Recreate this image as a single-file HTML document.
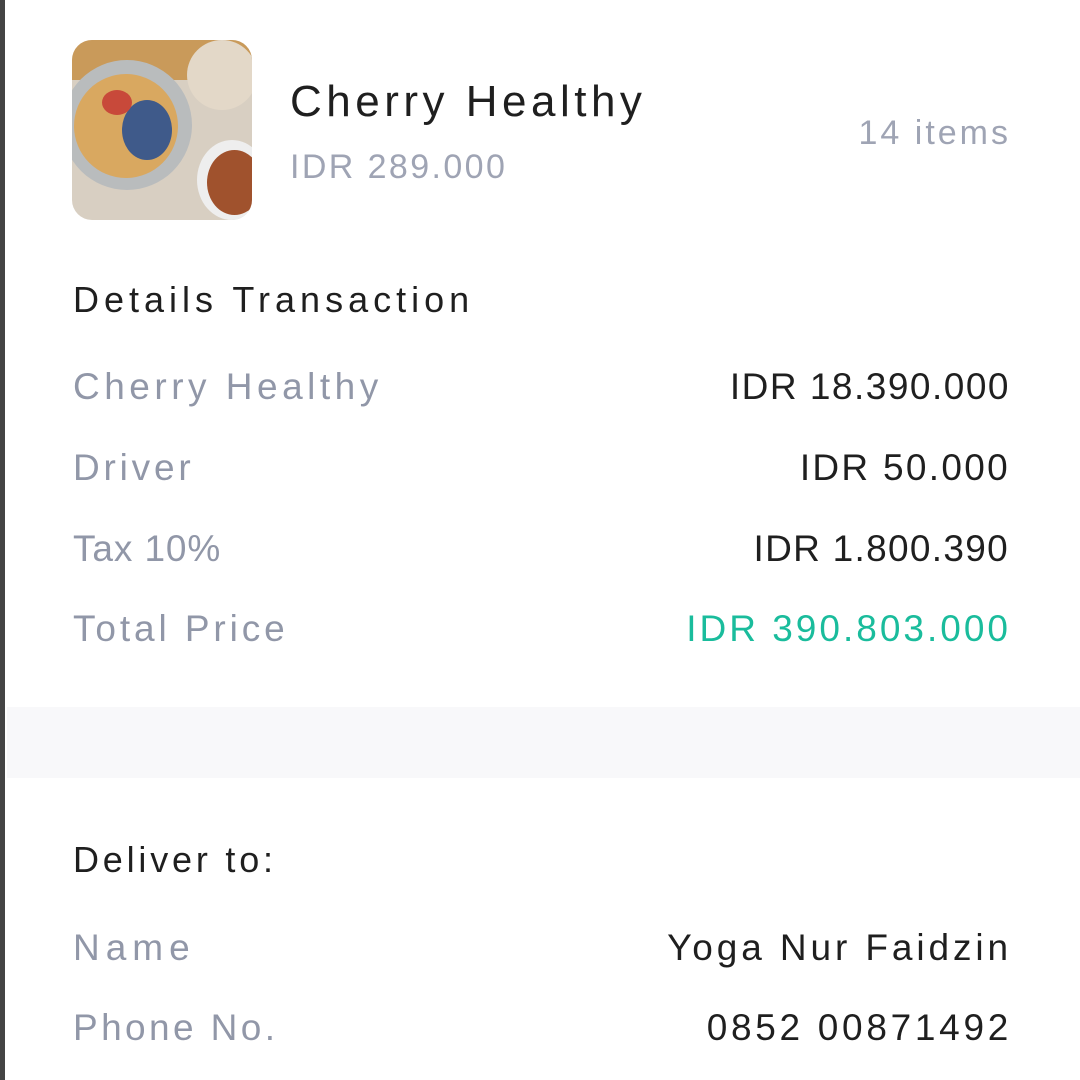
<!DOCTYPE html>
<html><head><meta charset="utf-8"><style>
html,body{margin:0;padding:0;width:1080px;height:1080px;background:#fff;overflow:hidden;font-family:"Liberation Sans",sans-serif}
.a{position:absolute;white-space:nowrap;line-height:1}
.l{left:73px;color:#9197a8;font-size:37px}
.r{color:#1f1f1f;font-size:37px;text-align:right}
</style></head><body>
<div style="position:absolute;left:0;top:0;width:5px;height:1080px;background:#444"></div>
<div style="position:absolute;left:72px;top:40px;width:180px;height:180px;border-radius:20px;overflow:hidden;background:#d8cfc2">
<div style="position:absolute;left:0;top:0;width:180px;height:40px;background:#c99a5a"></div>
<div style="position:absolute;left:-10px;top:20px;width:130px;height:130px;border-radius:50%;background:#b9bcbd"></div>
<div style="position:absolute;left:2px;top:34px;width:104px;height:104px;border-radius:50%;background:#d9a860"></div>
<div style="position:absolute;left:50px;top:60px;width:50px;height:60px;border-radius:50%;background:#3f5a8a"></div>
<div style="position:absolute;left:30px;top:50px;width:30px;height:25px;border-radius:50%;background:#c8493a"></div>
<div style="position:absolute;left:115px;top:0;width:70px;height:70px;border-radius:50%;background:#e3d8c8"></div>
<div style="position:absolute;left:125px;top:100px;width:70px;height:80px;border-radius:50%;background:#eee"></div>
<div style="position:absolute;left:135px;top:110px;width:55px;height:65px;border-radius:50%;background:#a0522d"></div>
</div>
<div class="a" style="left:290px;top:80px;font-size:44px;color:#1f1f1f;letter-spacing:4.5px">Cherry Healthy</div>
<div class="a" style="left:290px;top:150px;font-size:34px;color:#9fa4b4;letter-spacing:2.4px">IDR 289.000</div>
<div class="a" style="right:69px;top:116px;font-size:34px;color:#9fa4b4;letter-spacing:3px">14 items</div>
<div class="a" style="left:73px;top:282px;font-size:36px;color:#1f1f1f;letter-spacing:5px">Details Transaction</div>
<div class="a l" style="top:368px;letter-spacing:4.5px">Cherry Healthy</div><div class="a r" style="top:368px;letter-spacing:1.5px;right:70px">IDR 18.390.000</div>
<div class="a l" style="top:449px;letter-spacing:3.8px">Driver</div><div class="a r" style="top:449px;letter-spacing:2.3px;right:70px">IDR 50.000</div>
<div class="a l" style="top:530px;letter-spacing:0.9px">Tax 10%</div><div class="a r" style="top:530px;letter-spacing:1.3px;right:71px">IDR 1.800.390</div>
<div class="a l" style="top:610px;letter-spacing:3.9px">Total Price</div><div class="a r" style="top:610px;color:#1abc9c;letter-spacing:3px;right:69px">IDR 390.803.000</div>
<div style="position:absolute;left:7px;top:707px;width:1073px;height:71px;background:#f8f8fa"></div>
<div class="a" style="left:73px;top:842px;font-size:36px;color:#1f1f1f;letter-spacing:3.8px">Deliver to:</div>
<div class="a l" style="top:929px;letter-spacing:6px">Name</div><div class="a r" style="top:929px;letter-spacing:3.9px;right:68px">Yoga Nur Faidzin</div>
<div class="a l" style="top:1009px;letter-spacing:3.4px">Phone No.</div><div class="a r" style="top:1009px;letter-spacing:3.7px;right:68px">0852 00871492</div>
</body></html>
